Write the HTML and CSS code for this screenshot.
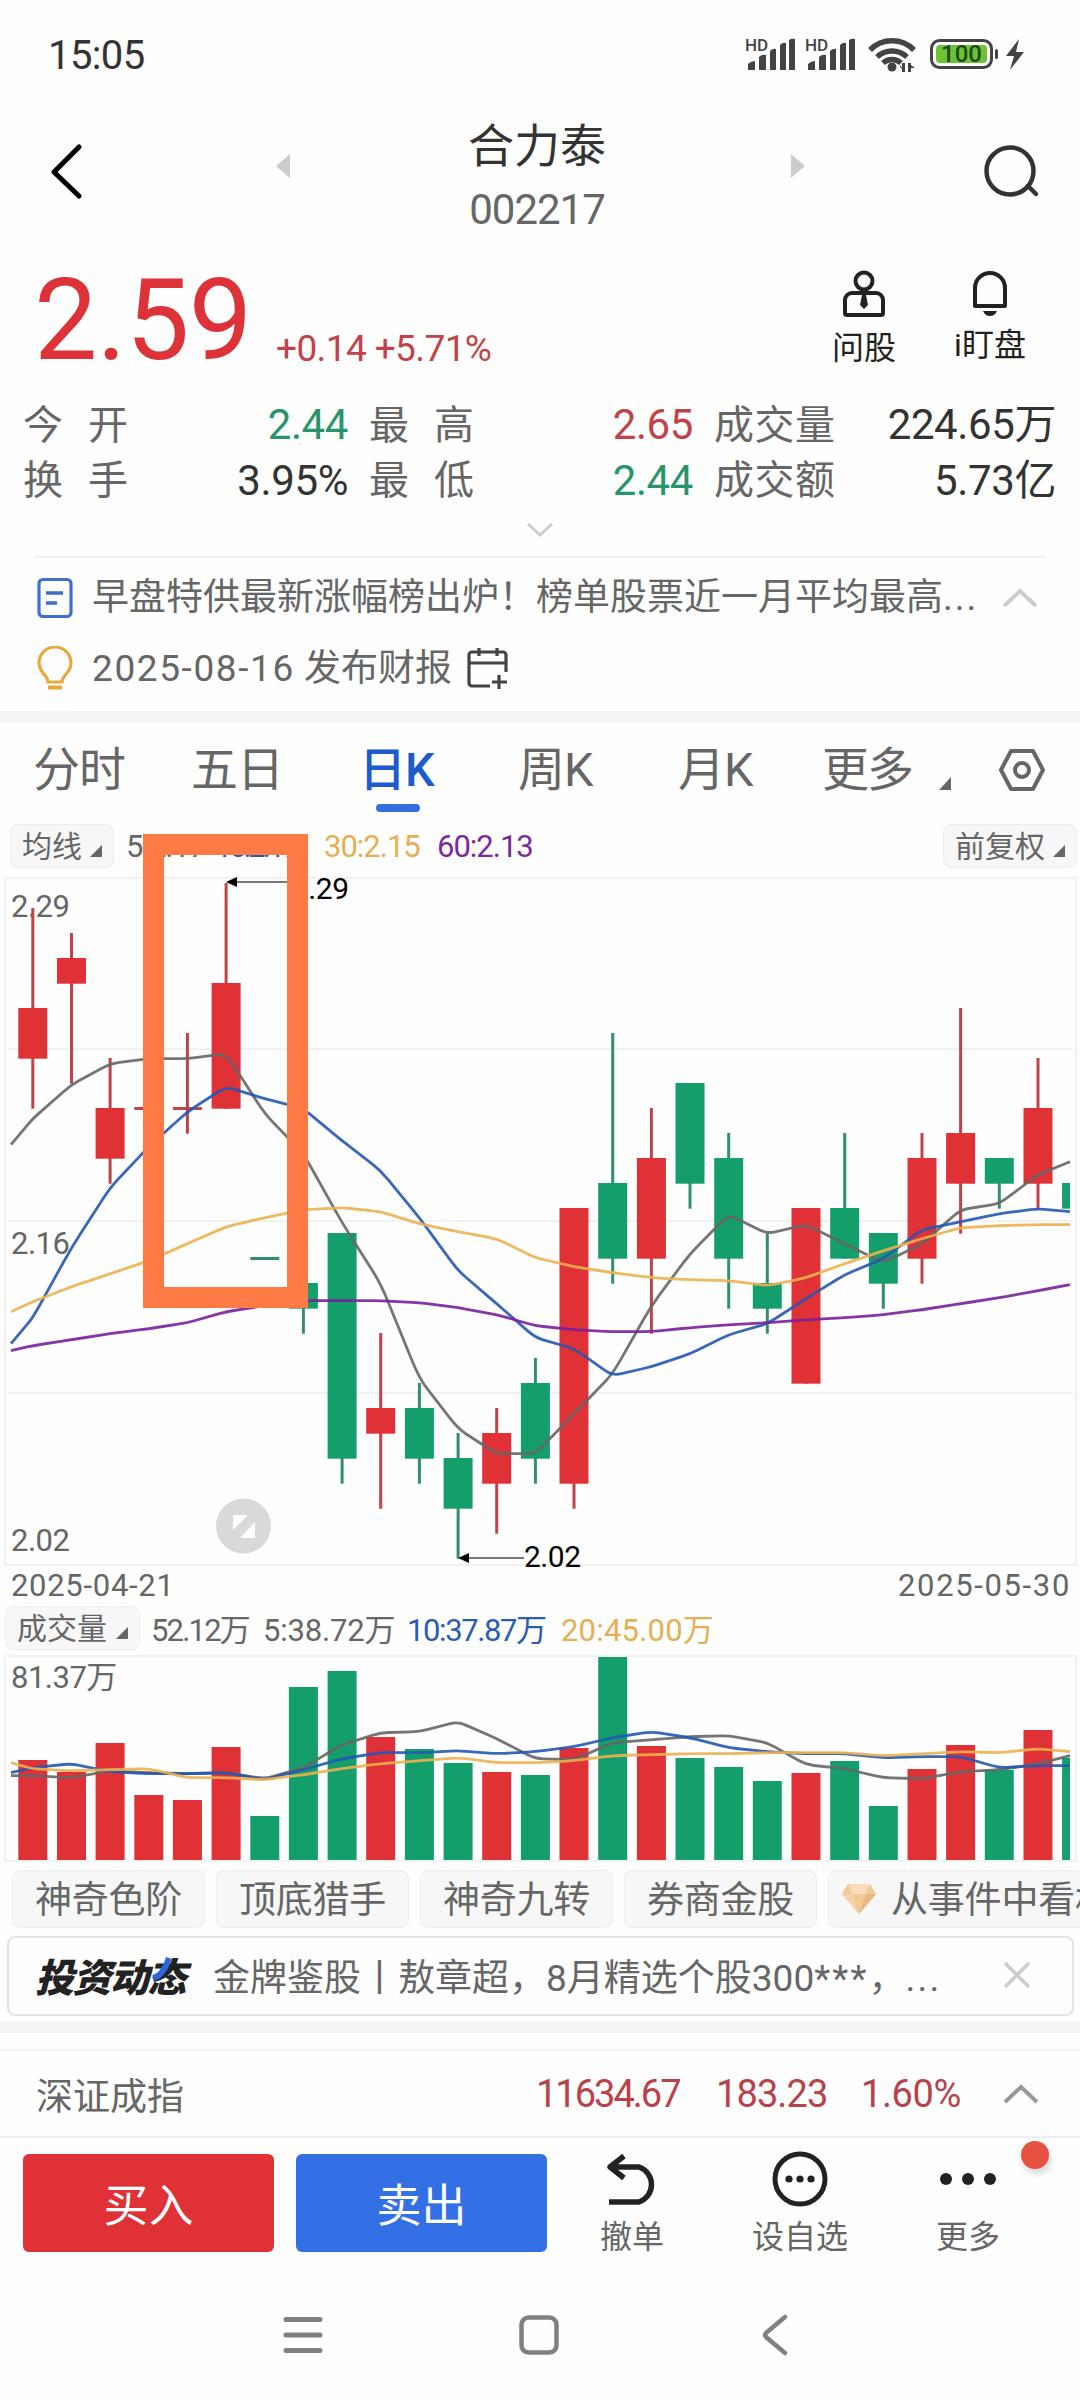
FILE: index.html
```html
<!DOCTYPE html>
<html lang="zh-CN">
<head>
<meta charset="utf-8">
<title>合力泰 002217</title>
<link rel="stylesheet" href="styles.css">
</head>
<body>
<div class="screen">
  <header class="status">
    <span class="clock">15:05</span>
    <svg class="status-icons" width="290" height="44" viewBox="740 32 290 44">
      <g fill="#444">
        <text class="hd" x="745" y="51">HD</text>
        <path d="M748 70v-6q3-3 7-3v9zM759 70V57q3-3 7-2v15zM770 70V51q3-3 6-2v21zM780 70V45q3-3 6-2v27zM789 70V40q3-2 6-1v31z"/>
        <text class="hd" x="805" y="51">HD</text>
        <path d="M808 70v-6q3-3 7-3v9zM819 70V57q3-3 7-2v15zM830 70V51q3-3 6-2v21zM840 70V45q3-3 6-2v27zM849 70V40q3-2 6-1v31z"/>
        <circle cx="892" cy="67" r="4.5"/>
        <path d="M902 63l3 0v9h-3zM908 63h3v9h-3zM905 72l-5-5v-2zM908 63l7 5h-5z"/>
        <rect x="995" y="49" width="3" height="10" rx="1.5"/>
        <path d="M1019 39l-13 17h8l-4 14 14-18h-8z"/>
      </g>
      <g fill="none" stroke="#444" stroke-width="5.500">
        <path d="M870 50a31 31 0 0 1 44 0M877 57a22 22 0 0 1 30 0M883 63a13 13 0 0 1 18 0"/>
        <rect x="931.5" y="40.500" width="60" height="27" rx="8" stroke-width="3"/>
      </g>
      <rect x="936" y="45" width="51" height="18" rx="4" fill="#6cc334"/>
      <text class="battery" x="961.5" y="62" text-anchor="middle">100</text>
    </svg>
  </header>

  <nav class="title-bar">
    <svg class="back" width="40" height="60" viewBox="0 0 40 60"><path d="M33 6L8 31l25 24" fill="none" stroke="#000" stroke-width="5" stroke-linecap="round" stroke-linejoin="round"/></svg>
    <svg class="prev" width="14" height="24" viewBox="0 0 14 24"><path d="M14 0v24L0 12z" fill="#ccc"/></svg>
    <div class="stock"><h1>合力泰</h1><p>002217</p></div>
    <svg class="next" width="14" height="24" viewBox="0 0 14 24"><path d="M0 0v24l14-12z" fill="#ccc"/></svg>
    <svg class="search" width="60" height="56" viewBox="0 0 60 56"><g fill="none" stroke="#333" stroke-width="4.500" stroke-linecap="round"><circle cx="28" cy="28" r="23.500"/><path d="M46 43l8 8"/></g></svg>
  </nav>

  <section class="quote">
    <strong class="price">2.59</strong>
    <span class="change">+0.14 +5.71%</span>
    <div class="tool">
      <svg width="44" height="48" viewBox="0 0 44 48"><g fill="none" stroke="#222" stroke-width="4"><circle cx="22" cy="11" r="8.500"/><path d="M10 23h24a7 7 0 0 1 7 7v13a2 2 0 0 1-2 2H5a2 2 0 0 1-2-2V30a7 7 0 0 1 7-7z"/></g><path d="M20 25h4l2 10-4 4-4-4z" fill="#222"/></svg>
      <span>问股</span>
    </div>
    <div class="tool bell">
      <svg width="40" height="46" viewBox="0 0 40 46"><path d="M5 36V18a15 15 0 0 1 30 0v18z" fill="none" stroke="#222" stroke-width="4" stroke-linejoin="round"/><path d="M13 41h14q-2 5-7 5t-7-5z" fill="#222"/></svg>
      <span>i盯盘</span>
    </div>
  </section>

  <section class="stats">
    <span class="label"><i>今</i><i>开</i></span><span class="num down">2.44</span>
    <span class="label"><i>最</i><i>高</i></span><span class="num up">2.65</span>
    <span class="label"><i>成</i><i>交</i><i>量</i></span><span class="num">224.65万</span>
    <span class="label"><i>换</i><i>手</i></span><span class="num">3.95%</span>
    <span class="label"><i>最</i><i>低</i></span><span class="num down">2.44</span>
    <span class="label"><i>成</i><i>交</i><i>额</i></span><span class="num">5.73亿</span>
  </section>
  <div class="expand"><svg width="30" height="18" viewBox="0 0 30 18"><path d="M3 3l12 11L27 3" fill="none" stroke="#ccc" stroke-width="3"/></svg></div>

  <section class="notes">
    <div class="note">
      <svg width="38" height="42" viewBox="0 0 38 42"><rect x="3" y="2.500" width="32" height="37" rx="4" fill="none" stroke="#3f6fcc" stroke-width="3.200"/><path d="M10 16h17M10 26h11" stroke="#3f6fcc" stroke-width="3.500"/></svg>
      <p class="headline">早盘特供最新涨幅榜出炉！榜单股票近一月平均最高<span>...</span></p>
      <svg class="fold" width="38" height="22" viewBox="0 0 38 22"><path d="M3 19L19 4l16 15" fill="none" stroke="#ccc" stroke-width="4"/></svg>
    </div>
    <div class="note">
      <svg width="38" height="46" viewBox="0 0 38 46"><g fill="none" stroke="#e5a93c" stroke-width="3.200"><path d="M12 36c0-7-9-9-9-19a16 16 0 0 1 32 0c0 10-9 12-9 19z"/><path d="M12 41.500h14" stroke-width="4"/></g></svg>
      <p class="report"><b>2025-08-16</b> 发布财报</p>
      <svg class="calendar" width="44" height="44" viewBox="0 0 44 44"><path d="M24 39H6a3 3 0 0 1-3-3V8a3 3 0 0 1 3-3h31a3 3 0 0 1 3 3v17M3 16h37M13 1v8M31 1v8M33 28v14M26 35h15" fill="none" stroke="#444" stroke-width="3.200"/></svg>
    </div>
  </section>
  <div class="band"></div>

  <nav class="tabs">
    <a>分时</a><a>五日</a><a class="active">日K</a><a>周K</a><a>月K</a><a>更多</a>
    <svg class="corner" width="12" height="13" viewBox="0 0 12 13"><path d="M0 13L12 0v13z" fill="#666"/></svg>
    <svg class="gear" width="48" height="44" viewBox="0 0 48 44"><g fill="none" stroke="#666" stroke-width="4"><path d="M13 3h22l10 19-10 19H13L3 22z" stroke-linejoin="round"/><circle cx="24" cy="22" r="7"/></g></svg>
  </nav>

  <div class="averages">
    <span class="button">均线<svg width="12" height="12" viewBox="0 0 12 12"><path d="M0 12L12 0v12z" fill="#666"/></svg></span>
    <span class="ma5">5:2.17</span><span class="ma10">10:2.17</span><span class="ma30">30:2.15</span><span class="ma60">60:2.13</span>
    <span class="button adjust">前复权<svg width="12" height="12" viewBox="0 0 12 12"><path d="M0 12L12 0v12z" fill="#666"/></svg></span>
  </div>

  <div class="kline">
    <svg id="kline" width="1080" height="728" viewBox="0 872 1080 728"></svg>
    <div class="highlight"></div>
  </div>

  <div class="volumes">
    <span class="button">成交量<svg width="12" height="12" viewBox="0 0 12 12"><path d="M0 12L12 0v12z" fill="#666"/></svg></span>
    <span class="v0">52.12万</span><span class="v5">5:38.72万</span><span class="v10">10:37.87万</span><span class="v20">20:45.00万</span>
  </div>
  <svg id="volume" width="1080" height="210" viewBox="0 1654 1080 210"></svg>

  <div class="chips">
    <span>神奇色阶</span><span>顶底猎手</span><span>神奇九转</span><span>券商金股</span>
    <span class="event"><svg width="36" height="32" viewBox="0 0 36 32"><path d="M7 1h22l6 10-17 20L1 11z" fill="#f3c99a"/><path d="M7 1h22l-4 10H11z" fill="#f9dcb8"/><path d="M1 11h10l7 20z" fill="#f7d3a9"/><path d="M35 11H25l-7 20z" fill="#e9b780"/></svg>从事件中看机会</span>
  </div>

  <div class="banner">
    <em>投资动态<svg width="22" height="24" viewBox="0 0 22 24"><path d="M1 21Q11 19 17 1" fill="none" stroke="#2b66dd" stroke-width="6"/></svg></em>
    <p>金牌鉴股丨敖章超，8月精选个股300<span>***</span>，<span>...</span></p>
    <svg class="close" width="30" height="30" viewBox="0 0 30 30"><path d="M3 3l24 24M27 3L3 27" stroke="#ccc" stroke-width="3.500"/></svg>
  </div>
  <div class="band"></div>

  <section class="index">
    <span class="name">深证成指</span>
    <span class="i1">11634.67</span><span class="i2">183.23</span><span class="i3">1.60%</span>
    <svg width="38" height="22" viewBox="0 0 38 22"><path d="M3 19L19 4l16 15" fill="none" stroke="#999" stroke-width="4"/></svg>
  </section>

  <footer class="actions">
    <button class="buy">买入</button>
    <button class="sell">卖出</button>
    <div class="act undo"><svg width="60" height="58" viewBox="0 0 60 58"><path d="M22 6L8 17l14 11M8 17h29a18.500 18.500 0 0 1 0 35H7" fill="none" stroke="#222" stroke-width="5.500" stroke-linejoin="round"/></svg><span>撤单</span></div>
    <div class="act watch"><svg width="60" height="58" viewBox="0 0 60 58"><circle cx="30" cy="29" r="25" fill="none" stroke="#222" stroke-width="5"/><g fill="#222"><circle cx="19" cy="29" r="3.600"/><circle cx="30" cy="29" r="3.600"/><circle cx="41" cy="29" r="3.600"/></g></svg><span>设自选</span></div>
    <div class="act more"><svg width="60" height="58" viewBox="0 0 60 58"><g fill="#222"><circle cx="8" cy="29" r="6"/><circle cx="30" cy="29" r="6"/><circle cx="52" cy="29" r="6"/></g></svg><span>更多</span><b class="dot"></b></div>
  </footer>

  <div class="system">
    <svg width="40" height="40" viewBox="0 0 40 40"><path d="M3 4.500h34M3 20h34M3 35.500h34" stroke="#808080" stroke-width="5" stroke-linecap="round"/></svg>
    <svg width="42" height="42" viewBox="0 0 42 42"><rect x="3.500" y="3.500" width="35" height="35" rx="7" fill="none" stroke="#808080" stroke-width="4.500"/></svg>
    <svg width="30" height="42" viewBox="0 0 30 42"><path d="M25 3L6 19q-2 2 0 4l19 16" fill="none" stroke="#808080" stroke-width="4.500" stroke-linecap="round"/></svg>
  </div>
</div>
<script src="chart.js"></script>
</body>
</html>
```
FILE: styles.css
```css
* { box-sizing: border-box; margin: 0; padding: 0; }
body { background: #fdfdfd; font-family: Roboto, "Noto Sans CJK SC", sans-serif; color: #333; }
svg { display: block; flex: none; }
i { font-style: normal; }
.screen { width: 1080px; height: 2400px; overflow: hidden; display: flex; flex-direction: column; background: #fefefe; }
.screen > * { flex: none; }

.status { height: 108px; padding: 0 50px 0 48px; display: flex; align-items: center; justify-content: space-between; }
.clock { padding-top: 2px; font-size: 40px; font-weight: 400; letter-spacing: -.6px; color: #333; }
.hd { font: 500 17px Roboto, sans-serif; }
.battery { font: 500 24px Roboto, sans-serif; fill: #1d4a10; }

.title-bar { height: 142px; display: flex; align-items: center; }
.back { margin: -17px 0 0 46px; }
.prev { margin: -27px 0 0 190px; }
.stock { width: 300px; margin: 0 104px 0 97px; text-align: center; }
.next { margin-top: -27px; }
.stock h1 { margin-top: -4px; font-size: 46px; font-weight: 400; line-height: 66px; }
.stock p { font-size: 42px; line-height: 62px; letter-spacing: -1px; color: #666; }
.search { margin: -16px 0 0 177px; }

.quote { height: 146px; padding-left: 34px; display: flex; align-items: flex-start; }
.price { width: 242px; font-size: 113px; font-weight: 400; line-height: 142px; letter-spacing: -.7px; color: #dd3338; }
.change { width: 551px; padding-top: 75px; font-size: 37px; line-height: 48px; letter-spacing: -.6px; color: #c24347; }
.tool { width: 74px; margin-top: 20px; display: flex; flex-direction: column; align-items: center; font-size: 32px; line-height: 40px; color: #222; }
.tool span { margin-top: 10px; }
.bell { width: 90px; margin-left: 44px; }
.bell span { margin-top: 9px; }

.stats { height: 114px; padding: 1px 0 0 23px; display: grid; grid-template-columns: 105px 241px 105px 240px 121px 242px; grid-template-rows: 56px 55px; color: #333; }
.label { display: flex; justify-content: space-between; align-items: center; font-size: 40px; line-height: 55px; color: #666; }
.num { padding-right: 21px; text-align: right; font-size: 42px; line-height: 55px; letter-spacing: -.4px; }
.up { color: #c24347; }
.down { color: #26956b; }
.expand { height: 46px; padding: 11px 0 0 525px; }

.notes { height: 155px; margin: 0 34px; border-top: 2px solid #f0f0f0; padding-top: 4px; color: #666; }
.note { height: 71px; display: flex; align-items: center; font-size: 37px; line-height: 48px; }
.note > svg:first-child { margin: 0 18px 0 2px; }
.headline { width: 909px; white-space: nowrap; }
.headline span { letter-spacing: 2px; }
.report b { font-weight: 400; letter-spacing: 1.6px; }
.calendar { margin-left: 14px; }
.band { height: 11px; background: #f4f4f4; }

.tabs { height: 102px; padding-left: 33px; display: flex; font-size: 47px; line-height: 96px; color: #666; }
.tabs a { width: 158px; height: 90px; letter-spacing: -1px; }
.tabs a:nth-child(2) { width: 168px; }
.tabs a:nth-child(3) { width: 159px; }
.tabs a:nth-child(4) { width: 160px; }
.tabs a:nth-child(5) { width: 144px; }
.tabs a:nth-child(6) { width: 117px; letter-spacing: -2px; }
.tabs .active { color: #205bcb; font-weight: 500; }
.tabs .active::after { content: ""; display: block; width: 44px; height: 8px; margin: -14px 0 0 17px; border-radius: 4px; background: #3670e0; }
.corner { margin-top: 55px; }
.gear { margin: 26px 0 0 47px; }

.averages { height: 44px; padding: 0 3px 0 10px; display: flex; font-size: 31px; line-height: 46px; letter-spacing: -1px; margin-bottom: 4px; }
.button { height: 44px; padding: 0 11px; display: flex; border: 1px solid #eee; border-radius: 8px; background: #f7f7f7; font-size: 30px; line-height: 43px; letter-spacing: 0; color: #666; }
.button svg { margin: 20px 0 0 auto; }
.averages .button { width: 104px; }
.averages .adjust { width: 134px; margin-left: auto; }
.ma5 { margin-left: 12px; width: 89px; color: #666; }
.ma10 { width: 109px; letter-spacing: -3px; color: #2b5cb3; }
.ma30 { width: 113px; color: #e5b055; }
.ma60 { color: #7a2a9c; }

.kline { position: relative; height: 728px; }
.kline svg { overflow: visible; }
.highlight { position: absolute; left: 143px; top: -38px; width: 165px; height: 474px; border: 21px solid #ff7b45; }
.axis { font: 31px Roboto, "Noto Sans CJK SC", sans-serif; letter-spacing: -.5px; fill: #666; }
.date { letter-spacing: .7px; }
.mark { font: 30px Roboto, sans-serif; letter-spacing: -.5px; fill: #000; }

.volumes { height: 48px; margin-top: 6px; padding-left: 5px; display: flex; font-size: 31px; line-height: 49px; letter-spacing: -.2px; color: #666; }
.volumes .button { width: 135px; }
.v0 { width: 112px; margin-left: 11px; letter-spacing: -1.8px; }
.v5 { width: 144px; }
.v10 { width: 154px; letter-spacing: -1.4px; color: #2b5cb3; }
.v20 { letter-spacing: .2px; color: #e5b055; }

.chips { height: 58px; margin: 6px 0 8px; padding-left: 12px; display: flex; gap: 11px; overflow: hidden; }
.chips span { flex: none; width: 193px; height: 58px; border: 1px solid #eee; border-radius: 8px; background: #f7f7f7; text-align: center; white-space: nowrap; font-size: 37px; line-height: 59px; letter-spacing: -.2px; color: #666; }
.chips .event { width: 340px; padding-left: 12px; display: flex; }
.event svg { margin: 12px 14px 0 0; }

.banner { height: 80px; margin: 0 6px 6px 7px; padding: 0 0 2px 26px; display: flex; align-items: center; border: 2px solid #e5e5e5; border-radius: 8px; font-size: 37px; color: #666; }
.banner em { position: relative; width: 178px; font-size: 39px; font-weight: 900; letter-spacing: -1.6px; color: #222; }
.banner em svg { position: absolute; left: 117px; top: 10px; }
.banner p { width: 789px; white-space: nowrap; }
.banner p span { letter-spacing: 2.2px; }

.index { height: 89px; margin-top: 16px; padding: 0 0 0 36px; border: solid #f0f0f0; border-width: 2px 0; display: flex; align-items: center; font-size: 38px; letter-spacing: -.9px; color: #b9414a; }
.name { width: 500px; font-size: 37px; letter-spacing: 0; color: #666; }
.i1 { width: 180px; letter-spacing: -2px; }
.i2 { width: 145px; }
.i3 { width: 141px; letter-spacing: -.4px; }

.actions { height: 131px; padding: 16px 0 0 23px; display: flex; align-items: flex-start; }
.actions button { width: 251px; height: 98px; border: 0; border-radius: 6px; font: 45px/94px "Noto Sans CJK SC", sans-serif; color: #fff; }
.buy { background: #e03137; margin-right: 22px; }
.sell { background: #3470e5; }
.act { position: relative; width: 120px; margin-top: -4px; display: flex; flex-direction: column; align-items: center; font-size: 32px; line-height: 40px; color: #666; }
.act span { margin-top: 9px; }
.undo { margin-left: 25px; }
.watch { margin-left: 48px; }
.more { margin-left: 48px; }
.dot { position: absolute; left: 113px; top: -9px; width: 28px; height: 28px; border-radius: 50%; background: #e75142; box-shadow: 2px 5px 6px rgba(0, 0, 0, .15); }

.system { padding: 45px 0 0 283px; display: flex; align-items: center; }
.system svg:nth-child(2) { margin: 0 200px 0 195px; }
```
FILE: chart.js
```js
const FIRST = 32.8, STEP = 38.66, BODY = 29;
const RED = '#df3136', GREEN = '#149e6b', GRAY = '#666', BLUE = '#2358b4', YELLOW = '#ecb14f', PURPLE = '#7a1f9c';
const X = i => FIRST + STEP * i;
const Y = ticks => 883 + 25 * ticks;

// [direction, high, body top, body bottom, low], in price ticks below 2.29
const candles = [
  ['r',1,5,7,9],['r',2,3,4,8],['r',7,9,11,12],['r',9,9,9,9],['r',6,9,9,10],['r',0,4,9,9],['g',15,15,15,15],
  ['g',16,16,17,18],['g',14,14,23,24],['r',18,21,22,25],['g',20,21,23,24],['g',22,23,25,27],['r',21,22,24,26],
  ['g',19,20,23,24],['r',13,13,24,25],['g',6,12,15,16],['r',9,11,15,18],['g',8,8,12,13],['g',10,11,15,17],
  ['g',14,16,17,18],['r',13,13,20,20],['g',10,13,15,15],['g',14,14,16,17],['r',10,11,15,16],['r',5,10,12,14],
  ['g',11,11,12,13],['r',7,9,12,13],['g',12,12,13,13]
];
const volumeTops = [1760,1772,1743,1795,1800,1747,1816,1687,1671,1737,1749,1763,1772,1775,1748,1657,1746,1758,1767,1781,1773,1761,1806,1769,1745,1770,1730,1758];

// Each series starts and ends at the plot edges, with one value per day between.
const priceLines = [
  [GRAY,[1144,1118,1084,1063,1058,1058,1053,1113,1153,1222,1283,1378,1428,1453,1453,1413,1373,1305,1253,1214,1233,1224,1243,1262,1243,1209,1203,1174,1161]],
  [BLUE,[1343,1317,1247,1187,1146,1111,1086,1098,1108,1140,1170,1217,1270,1303,1337,1348,1375,1366,1353,1334,1323,1298,1274,1258,1229,1221,1213,1208,1211]],
  [YELLOW,[1311,1301,1286,1273,1260,1243,1226,1217,1209,1207,1211,1223,1231,1238,1257,1266,1272,1277,1279,1280,1285,1277,1263,1250,1238,1227,1225,1224,1224]],
  [PURPLE,[1350,1345,1339,1333,1328,1322,1311,1305,1300,1300,1300,1302,1307,1314,1325,1329,1331,1331,1327,1324,1322,1319,1317,1314,1309,1303,1297,1290,1284]]
];
const volumeLines = [
  [GRAY,[1775,1775,1777,1770,1772,1773,1772,1778,1767,1744,1732,1731,1721,1738,1758,1759,1742,1739,1736,1735,1742,1764,1768,1777,1778,1771,1769,1763,1755]],
  [BLUE,[1772,1767,1763,1771,1773,1773,1772,1779,1769,1758,1752,1752,1750,1753,1751,1746,1737,1731,1737,1747,1751,1753,1753,1757,1756,1756,1767,1765,1765]],
  [YELLOW,[1762,1768,1770,1769,1768,1777,1777,1779,1774,1768,1763,1760,1757,1762,1762,1760,1755,1754,1753,1753,1752,1752,1752,1755,1753,1751,1752,1748,1751]]
];

const rect = (x, y, w, h, c) => `<rect x="${x.toFixed(1)}" y="${y}" width="${w.toFixed(1)}" height="${h}" fill="${c}"/>`;
const line = ([color, ys]) => {
  const pts = ys.map((y, i) => [i === 0 ? 11 : i === ys.length - 1 ? 1070 : X(i - 1), y + .7]);
  let d = `M${pts[0]}`;
  for (let i = 1; i < pts.length - 1; i++) {
    const [px, py] = pts[i - 1], [x, y] = pts[i], [nx, ny] = pts[i + 1];
    const k = .2;
    d += `L${x - (x - px) * k} ${y - (y - py) * k}Q${x} ${y} ${x + (nx - x) * k} ${y + (ny - y) * k}`;
  }
  d += `L${pts[pts.length - 1]}`;
  return `<path d="${d}" fill="none" stroke="${color}" stroke-width="2.8" stroke-opacity=".9" stroke-linejoin="round"/>`;
};
const width = x => Math.min(BODY, 1070 - x);
const grid = d => `<path d="${d}" fill="none" stroke="#f1f1f1" stroke-width="2"/>`;

let k = grid('M5 878H1076V1565H5zM8 1049H1073M8 1221H1073M8 1393H1073');
k += '<text class="axis" x="11" y="917">2.29</text><text class="axis" x="11" y="1254">2.16</text><text class="axis" x="11" y="1551">2.02</text>';
candles.forEach(([dir, hi, top, bottom, low], i) => {
  const c = dir === 'r' ? RED : GREEN, wick = dir === 'r' ? '#c24347' : '#30906d', x = X(i);
  if (x < 1070) k += rect(x - 1.5, Y(hi), 3, Y(low) - Y(hi) + .7, wick);
  const left = x - BODY / 2;
  k += top === bottom ? rect(left, Y(top) - 1, BODY, 3, wick) : rect(left, Y(top), width(left), Y(bottom) - Y(top) + .7, c);
});
k += priceLines.map(line).join('');
k += '<path d="M236 882H290M468 1558H524" stroke="#777" stroke-width="1.8"/><path d="M226 882l11-5v10zM458 1558l11-5v10z"/>';
k += '<text class="mark" x="292" y="899">2.29</text><text class="mark" x="524" y="1567">2.02</text>';
k += '<circle cx="243.5" cy="1526" r="27.5" fill="#d9d9d9"/><path d="M233 1515h15l-15 15zM255 1522v16h-15z" fill="#fff"/>';
k += '<text class="axis date" x="11" y="1596">2025-04-21</text><text class="axis date" x="1070" y="1596" text-anchor="end" textLength="172">2025-05-30</text>';
document.getElementById('kline').innerHTML = k;

let v = grid('M5 1656H1076V1861H5z') + '<text class="axis" x="11" y="1688">81.37万</text>';
volumeTops.forEach((top, i) => {
  const left = X(i) - BODY / 2;
  v += rect(left, top, width(left), 1860 - top, candles[i][0] === 'r' ? RED : GREEN);
});
v += volumeLines.map(line).join('');
document.getElementById('volume').innerHTML = v;
```
